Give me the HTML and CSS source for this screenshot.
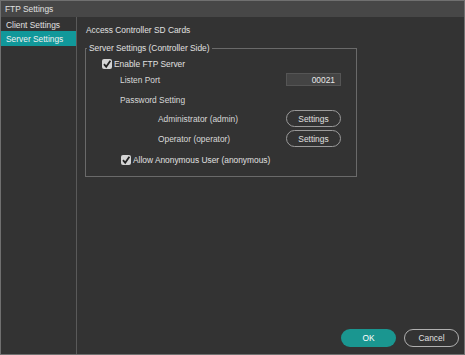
FILE: index.html
```html
<!DOCTYPE html>
<html>
<head>
<meta charset="utf-8">
<link rel="stylesheet" href="styles.css">
</head>
<body>
<div class="window">
  <div class="titlebar">FTP Settings</div>
  <div class="main">
    <div class="sidebar">
      <div class="nav-item">Client Settings</div>
      <div class="nav-item active">Server Settings</div>
    </div>
    <div class="content">
      <div class="heading">Access Controller SD Cards</div>
      <fieldset class="group">
        <legend>Server Settings (Controller Side)</legend>
        <label class="check">
          <span class="box"><svg viewBox="0 0 10 10" width="10" height="10"><path d="M2 5.2 L4.2 7.8 L8.4 1.8" fill="none" stroke="#222" stroke-width="1.8"/></svg></span>
          Enable FTP Server
        </label>
        <div class="row row-port">
          <span class="lbl">Listen Port</span>
          <span class="input">00021</span>
        </div>
        <div class="row row-pw">
          <span class="lbl">Password Setting</span>
        </div>
        <div class="row row-user">
          <span class="lbl">Administrator (admin)</span>
          <span class="btn-outline">Settings</span>
        </div>
        <div class="row row-user">
          <span class="lbl">Operator (operator)</span>
          <span class="btn-outline">Settings</span>
        </div>
        <label class="check check-anon">
          <span class="box"><svg viewBox="0 0 10 10" width="10" height="10"><path d="M2 5.2 L4.2 7.8 L8.4 1.8" fill="none" stroke="#222" stroke-width="1.8"/></svg></span>
          Allow Anonymous User (anonymous)
        </label>
      </fieldset>
      <div class="footer">
        <span class="btn btn-ok">OK</span>
        <span class="btn btn-cancel">Cancel</span>
      </div>
    </div>
  </div>
</div>
</body>
</html>
```
FILE: styles.css
```css
* { box-sizing: border-box; }
html, body { margin: 0; padding: 0; background: #333333; }
body {
  font-family: "Liberation Sans", "DejaVu Sans", sans-serif;
  font-size: 8.4px;
  color: #d8d8d8;
}
.window {
  width: 465px;
  height: 355px;
  border: 1px solid #707070;
  display: flex;
  flex-direction: column;
  background: #333333;
}
.titlebar {
  height: 16px;
  background: #474747;
  padding: 3px 0 0 4px;
  color: #e0e0e0;
}
.main {
  flex: 1;
  display: flex;
}
.sidebar {
  width: 76px;
  border-right: 1px solid #5a5a5a;
  background: #333333;
}
.nav-item {
  height: 14px;
  padding: 3px 0 0 5px;
  color: #e0e0e0;
}
.nav-item.active {
  background: #11989a;
  height: 15px;
  padding-top: 3px;
  color: #f0f0f0;
}
.content {
  flex: 1;
  display: flex;
  flex-direction: column;
  padding: 8px 0 0 8px;
}
.heading {
  height: 13px;
  color: #e0e0e0;
  padding-left: 1px;
}
.group {
  margin: 5px 0 0 0;
  width: 272px;
  height: 134px;
  border: 1px solid #6a6a6a;
  padding: 0;
  min-width: 0;
}
.group legend {
  padding: 0 2px;
  margin-left: 1px;
  color: #e0e0e0;
}
.check {
  display: flex;
  align-items: center;
  gap: 2px;
  margin: 5px 0 0 16px;
  height: 11px;
  color: #e0e0e0;
}
.box {
  width: 10px;
  height: 10px;
  background: #d4d4d4;
  border-radius: 2px;
  display: inline-flex;
}
.row {
  display: flex;
  align-items: center;
  justify-content: space-between;
  padding-right: 15px;
}
.row-port { margin-top: 4px; height: 13px; padding-left: 34px; }
.row-pw { margin-top: 8px; height: 12px; padding-left: 34px; }
.row-user { height: 17px; padding-left: 72px; margin-top: 3px; }
.row-pw + .row-user { margin-top: 4px; }
.input {
  width: 55px;
  height: 13px;
  background: #444444;
  border: 1px solid #555555;
  text-align: right;
  padding: 1px 5px 0 0;
  color: #e8e8e8;
}
.btn-outline {
  width: 55px;
  height: 17px;
  border: 1px solid #9a9a9a;
  border-radius: 9px;
  display: flex;
  align-items: center;
  justify-content: center;
  color: #e0e0e0;
}
.check-anon { margin: 7px 0 0 35px; }
.footer {
  margin-top: auto;
  display: flex;
  justify-content: flex-end;
  gap: 8px;
  padding: 0 5px 7px 0;
}
.btn {
  width: 55px;
  height: 18px;
  border-radius: 9px;
  display: flex;
  align-items: center;
  justify-content: center;
}
.btn-ok { background: #1a9690; color: #ffffff; }
.btn-cancel { border: 1px solid #b0b0b0; color: #e0e0e0; }
```
